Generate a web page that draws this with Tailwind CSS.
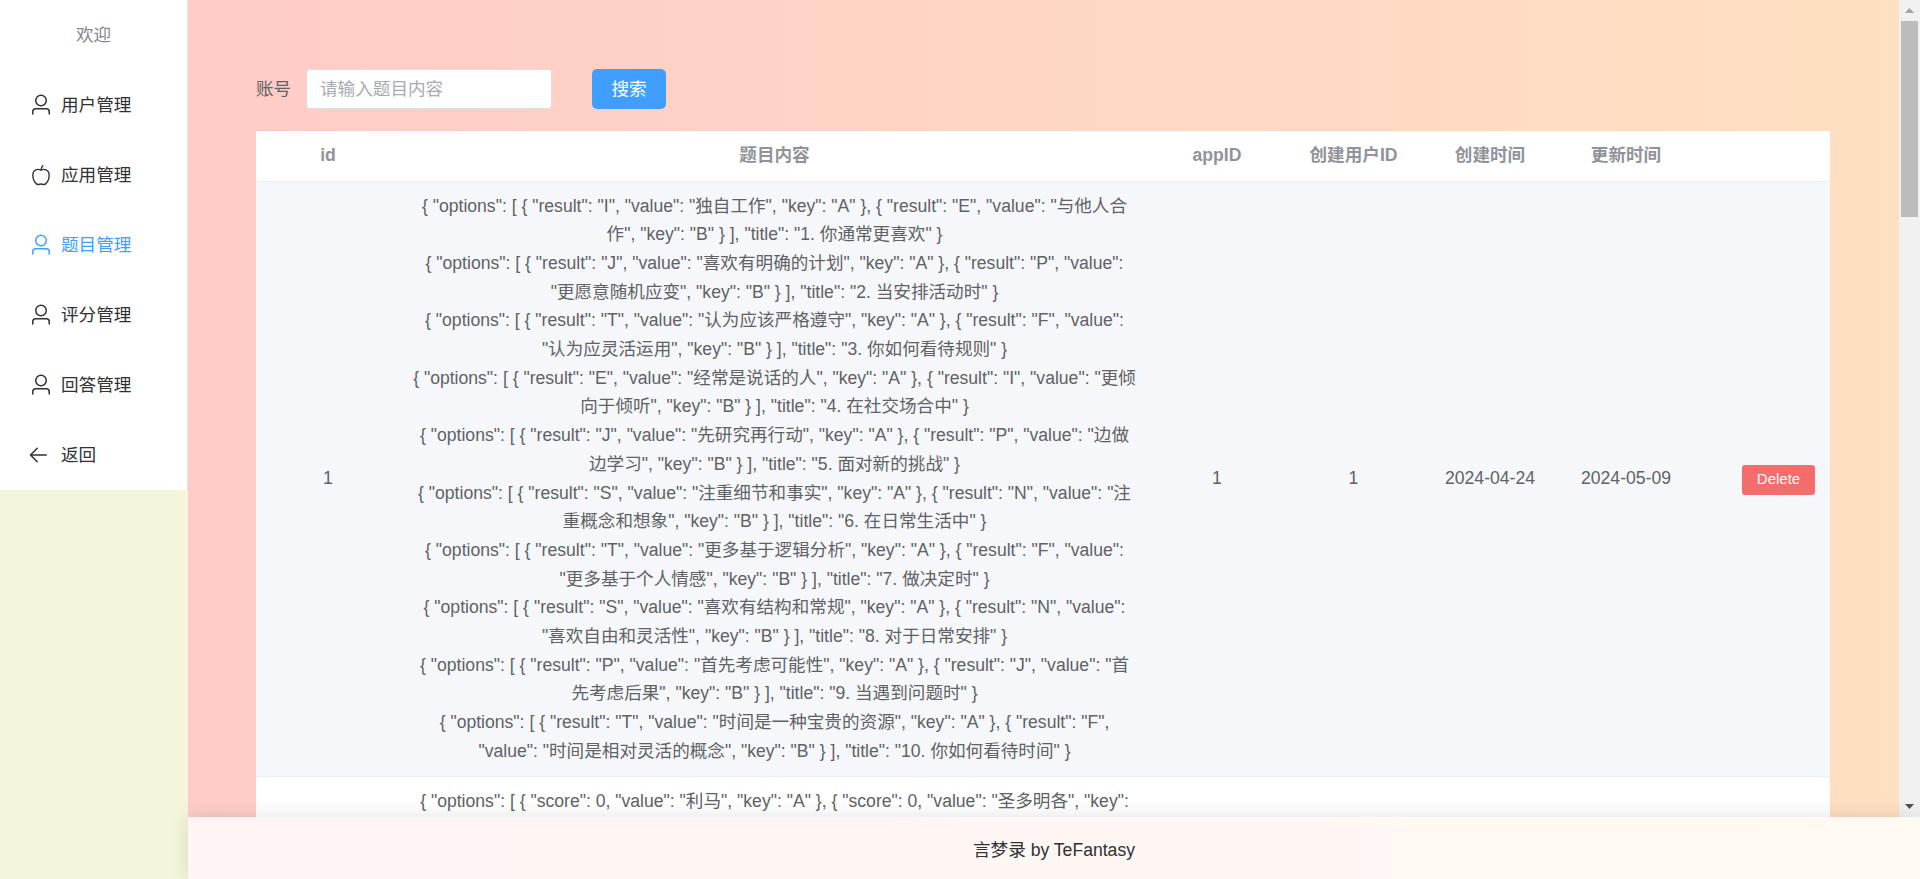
<!DOCTYPE html>
<html lang="zh">
<head>
    <meta charset="UTF-8">
    <title>题目管理</title>
    <script src="https://cdn.jsdelivr.net/npm/@tailwindcss/browser@4"></script>
</head>
<body class="h-screen overflow-hidden flex [font-family:'Liberation_Sans','Noto_Sans_CJK_SC',sans-serif] text-[#303133]">
    <!-- 侧边栏 -->
    <aside class="w-[188px] shrink-0 bg-[#f5f5dc]">
        <nav class="h-[490px] bg-white border-r border-[#e6e6e6] text-[17.6px]">
            <div class="h-[70px] flex items-center justify-center text-[#858890]">欢迎</div>
            <a class="h-[70px] flex items-center pl-[29px]">
                <svg class="w-6 h-6 mr-[8px]" viewBox="0 0 1024 1024" fill="currentColor"><path d="M512 512a192 192 0 1 0 0-384 192 192 0 0 0 0 384zm0 64a256 256 0 1 1 0-512 256 256 0 0 1 0 512zm320 320v-96a96 96 0 0 0-96-96H288a96 96 0 0 0-96 96v96a32 32 0 1 1-64 0v-96a160 160 0 0 1 160-160h448a160 160 0 0 1 160 160v96a32 32 0 1 1-64 0z"/></svg>
                用户管理
            </a>
            <a class="h-[70px] flex items-center pl-[29px]">
                <svg class="w-6 h-6 mr-[8px]" viewBox="0 0 24 24" fill="none" stroke="currentColor" stroke-width="1.4" stroke-linecap="round" stroke-linejoin="round"><path d="M12 7.2C9.5 5.6 3.8 6 3.8 12.6c0 4.6 3 8.9 5.6 8.9 1 0 1.6-.5 2.6-.5s1.600.5 2.600.5c2.600 0 5.600-4.300 5.600-8.900C20.200 6 14.500 5.600 12 7.200zM12 7.200c0-1.700.5-3.200 1.800-4.400"/></svg>
                应用管理
            </a>
            <a class="h-[70px] flex items-center pl-[29px] text-[#409eff]">
                <svg class="w-6 h-6 mr-[8px]" viewBox="0 0 1024 1024" fill="currentColor"><path d="M512 512a192 192 0 1 0 0-384 192 192 0 0 0 0 384zm0 64a256 256 0 1 1 0-512 256 256 0 0 1 0 512zm320 320v-96a96 96 0 0 0-96-96H288a96 96 0 0 0-96 96v96a32 32 0 1 1-64 0v-96a160 160 0 0 1 160-160h448a160 160 0 0 1 160 160v96a32 32 0 1 1-64 0z"/></svg>
                题目管理
            </a>
            <a class="h-[70px] flex items-center pl-[29px]">
                <svg class="w-6 h-6 mr-[8px]" viewBox="0 0 1024 1024" fill="currentColor"><path d="M512 512a192 192 0 1 0 0-384 192 192 0 0 0 0 384zm0 64a256 256 0 1 1 0-512 256 256 0 0 1 0 512zm320 320v-96a96 96 0 0 0-96-96H288a96 96 0 0 0-96 96v96a32 32 0 1 1-64 0v-96a160 160 0 0 1 160-160h448a160 160 0 0 1 160 160v96a32 32 0 1 1-64 0z"/></svg>
                评分管理
            </a>
            <a class="h-[70px] flex items-center pl-[29px]">
                <svg class="w-6 h-6 mr-[8px]" viewBox="0 0 1024 1024" fill="currentColor"><path d="M512 512a192 192 0 1 0 0-384 192 192 0 0 0 0 384zm0 64a256 256 0 1 1 0-512 256 256 0 0 1 0 512zm320 320v-96a96 96 0 0 0-96-96H288a96 96 0 0 0-96 96v96a32 32 0 1 1-64 0v-96a160 160 0 0 1 160-160h448a160 160 0 0 1 160 160v96a32 32 0 1 1-64 0z"/></svg>
                回答管理
            </a>
            <a class="h-[70px] flex items-center pl-[29px]">
                <svg class="w-6 h-6 mr-[8px] -translate-x-[3px]" viewBox="0 0 1024 1024" fill="currentColor"><path d="M224 480h640a32 32 0 1 1 0 64H224a32 32 0 0 1 0-64z"/><path d="m237.248 512 265.408 265.344a32 32 0 0 1-45.312 45.312l-288-288a32 32 0 0 1 0-45.312l288-288a32 32 0 1 1 45.312 45.312L237.248 512z"/></svg>
                返回
            </a>
        </nav>
    </aside>

    <!-- 右侧内容 -->
    <div class="flex-1 min-w-0 flex flex-col bg-[linear-gradient(to_right,#ffccc7,#ffe0c2)]">
        <div class="flex-1 min-h-0 flex">
            <main class="flex-1 min-w-0 overflow-hidden pt-[69px] pl-[68px] pr-[69px]">
                <!-- 搜索 -->
                <form class="flex items-center h-10 mb-[22px] text-[17.6px]">
                    <label class="w-[36px] mr-[14px] text-[#606266] whitespace-nowrap">账号</label>
                    <input class="w-[246px] h-10 px-[13px] bg-white border border-[#dcdfe6] rounded-[4px] outline-none placeholder:text-[#a8abb2]" placeholder="请输入题目内容">
                    <button type="button" class="ml-[40px] w-[74px] h-10 bg-[#409eff] text-white rounded-[5px]">搜索</button>
                </form>

                <!-- 表格 -->
                <table class="w-full table-fixed bg-white text-[17.6px] text-[#606266] text-center leading-[28.7px]">
                    <colgroup>
                        <col class="w-[144px]">
                        <col class="w-[749px]">
                        <col class="w-[136px]">
                        <col class="w-[137px]">
                        <col class="w-[136px]">
                        <col class="w-[136px]">
                        <col>
                    </colgroup>
                    <thead class="text-[#909399] font-bold">
                        <tr class="h-[50px] border-b border-[#ebeef5]">
                            <th>id</th>
                            <th>题目内容</th>
                            <th>appID</th>
                            <th>创建用户ID</th>
                            <th>创建时间</th>
                            <th>更新时间</th>
                            <th></th>
                        </tr>
                    </thead>
                    <tbody>
                        <tr class="bg-[#f5f7fa] border-b border-[#ebeef5]">
                            <td>1</td>
                            <td class="px-3 py-[10px]">
                                <div>{ "options": [ { "result": "I", "value": "独自工作", "key": "A" }, { "result": "E", "value": "与他人合作", "key": "B" } ], "title": "1. 你通常更喜欢" }</div>
                                <div>{ "options": [ { "result": "J", "value": "喜欢有明确的计划", "key": "A" }, { "result": "P", "value": "更愿意随机应变", "key": "B" } ], "title": "2. 当安排活动时" }</div>
                                <div>{ "options": [ { "result": "T", "value": "认为应该严格遵守", "key": "A" }, { "result": "F", "value": "认为应灵活运用", "key": "B" } ], "title": "3. 你如何看待规则" }</div>
                                <div>{ "options": [ { "result": "E", "value": "经常是说话的人", "key": "A" }, { "result": "I", "value": "更倾向于倾听", "key": "B" } ], "title": "4. 在社交场合中" }</div>
                                <div>{ "options": [ { "result": "J", "value": "先研究再行动", "key": "A" }, { "result": "P", "value": "边做边学习", "key": "B" } ], "title": "5. 面对新的挑战" }</div>
                                <div>{ "options": [ { "result": "S", "value": "注重细节和事实", "key": "A" }, { "result": "N", "value": "注重概念和想象", "key": "B" } ], "title": "6. 在日常生活中" }</div>
                                <div>{ "options": [ { "result": "T", "value": "更多基于逻辑分析", "key": "A" }, { "result": "F", "value": "更多基于个人情感", "key": "B" } ], "title": "7. 做决定时" }</div>
                                <div>{ "options": [ { "result": "S", "value": "喜欢有结构和常规", "key": "A" }, { "result": "N", "value": "喜欢自由和灵活性", "key": "B" } ], "title": "8. 对于日常安排" }</div>
                                <div>{ "options": [ { "result": "P", "value": "首先考虑可能性", "key": "A" }, { "result": "J", "value": "首先考虑后果", "key": "B" } ], "title": "9. 当遇到问题时" }</div>
                                <div>{ "options": [ { "result": "T", "value": "时间是一种宝贵的资源", "key": "A" }, { "result": "F", "value": "时间是相对灵活的概念", "key": "B" } ], "title": "10. 你如何看待时间" }</div>
                            </td>
                            <td>1</td>
                            <td>1</td>
                            <td>2024-04-24</td>
                            <td>2024-05-09</td>
                            <td class="text-right pr-[15px]">
                                <button type="button" class="w-[73px] h-[30px] bg-[#f56c6c] text-white text-[15px] rounded-[3px] translate-y-[1px]">Delete</button>
                            </td>
                        </tr>
                        <tr>
                            <td></td>
                            <td class="px-3 py-[10px]">
                                <div>{ "options": [ { "score": 0, "value": "利马", "key": "A" }, { "score": 0, "value": "圣多明各", "key": "B" }, { "score": 0, "value": "哈瓦那", "key": "C" } ] }</div>
                            </td>
                            <td></td><td></td><td></td><td></td><td></td>
                        </tr>
                    </tbody>
                </table>
            </main>

            <!-- 滚动条 -->
            <div class="w-[21px] shrink-0 bg-[#f1f1f1] flex flex-col items-center">
                <div class="h-[21px] flex items-center justify-center">
                    <svg class="w-[9px] h-[5px]" viewBox="0 0 9 5" fill="#a3a3a3"><path d="M4.500 0 9 5H0z"/></svg>
                </div>
                <div class="w-[17px] h-[196px] bg-[#bcbcbc]"></div>
                <div class="mt-auto h-[21px] flex items-center justify-center">
                    <svg class="w-[9px] h-[5px]" viewBox="0 0 9 5" fill="#505050"><path d="M0 0h9L4.500 5z"/></svg>
                </div>
            </div>
        </div>

        <!-- 页脚 -->
        <footer class="h-[62px] shrink-0 pt-[4px] relative z-10 bg-white/80 shadow-[0_0_20px_rgba(0,0,0,0.12)] flex items-center justify-center text-[17.6px]">
            言梦录 by TeFantasy
        </footer>
    </div>
</body>
</html>
